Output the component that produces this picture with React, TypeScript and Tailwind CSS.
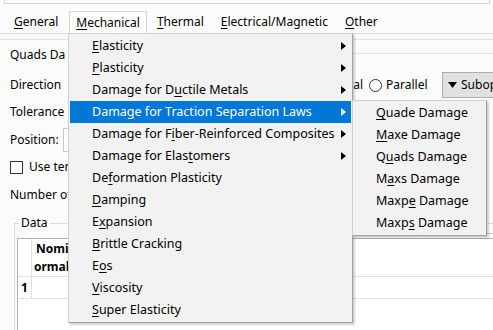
import React from "react";

const font = "font-['Noto_Sans','Liberation_Sans',sans-serif]";

// label with one underlined mnemonic letter: [before, key, after]
type Label = [string, string, string];

const mainItems: { label: Label; sub?: boolean; active?: boolean }[] = [
    { label: ["", "E", "lasticity"], sub: true },
    { label: ["", "P", "lasticity"], sub: true },
    { label: ["Damage for D", "u", "ctile Metals"], sub: true },
    { label: ["Dama", "g", "e for Traction Separation Laws"], sub: true, active: true },
    { label: ["Damage for F", "i", "ber-Reinforced Composites"], sub: true },
    { label: ["Damage for Elas", "t", "omers"], sub: true },
    { label: ["De", "f", "ormation Plasticity"] },
    { label: ["", "D", "amping"] },
    { label: ["E", "x", "pansion"] },
    { label: ["", "B", "rittle Cracking"] },
    { label: ["E", "o", "s"] },
    { label: ["", "V", "iscosity"] },
    { label: ["", "S", "uper Elasticity"] },
];

const subItems: Label[] = [
    ["", "Q", "uade Damage"],
    ["", "M", "axe Damage"],
    ["Q", "u", "ads Damage"],
    ["M", "a", "xs Damage"],
    ["Maxp", "e", " Damage"],
    ["Maxp", "s", " Damage"],
];

function Mnemonic({ label }: { label: Label }) {
    return (
        <span className="whitespace-nowrap">
            {label[0]}
            <span className="underline underline-offset-2">{label[1]}</span>
            {label[2]}
        </span>
    );
}

function Arrow({ white }: { white?: boolean }) {
    return (
        <svg width="5" height="8" viewBox="0 0 5 8" className="shrink-0">
            <path d="M0 0 L5 4 L0 8 Z" fill={white ? "#ffffff" : "#000000"} />
        </svg>
    );
}

export default function App() {
    const tabs: Label[] = [
        ["", "G", "eneral"],
        ["", "M", "echanical"],
        ["", "T", "hermal"],
        ["", "E", "lectrical/Magnetic"],
        ["", "O", "ther"],
    ];

    return (
        <div
            className={`relative w-[493px] h-[330px] overflow-hidden bg-[#fbfbfb] text-[12px] text-black ${font}`}>
            {/* Frame above the tabs */}
            <div className="mx-[4px] mr-[3px] h-[4px] border-x border-b border-[#d5d5d5]" />

            {/* Tabs */}
            <div className="mt-[7px] flex h-[23px] items-end border-b border-[#d9d9d9] pl-[8px]">
                {tabs.map((t, i) => (
                    <div
                        key={i}
                        className={`flex h-[22px] items-center px-[6px] ${
                            i === 1
                                ? "-mb-px h-[23px] border-x border-t border-[#d9d9d9] bg-white ml-[5px] mr-[4px]"
                                : i > 1
                                  ? "mr-[5px]"
                                  : ""
                        }`}>
                        <Mnemonic label={t} />
                    </div>
                ))}
            </div>

            {/* Panel */}
            <div className="mt-[5px] border-t border-[#e3e3e3] pl-[10px]">
                <div className="relative flex h-[22px] items-center mt-[4px]">
                    <span>Quads Da</span>
                    <div className="absolute left-[190px] right-0 top-[9px] border-t border-[#e3e3e3]" />
                </div>

                <div className="mt-[8px] flex h-[22px] items-center">
                    <span className="w-[290px] shrink-0">Direction</span>
                    <span className="flex w-[69px] shrink-0 items-center justify-end gap-[4px] pr-[6px]">
                        <span className="h-[13px] w-[13px] rounded-full border border-[#333]" />
                        Normal
                    </span>
                    <span className="flex w-[73px] shrink-0 items-center gap-[4px]">
                        <span className="h-[13px] w-[13px] rounded-full border border-[#333] bg-white" />
                        Parallel
                    </span>
                    <button className="flex h-[26px] w-[90px] shrink-0 items-center gap-[4px] border border-[#adadad] bg-[#e1e1e1] px-[5px]">
                        <svg width="9" height="6" viewBox="0 0 9 6">
                            <path d="M0 0 L9 0 L4.5 6 Z" fill="#000" />
                        </svg>
                        Suboptions
                    </button>
                </div>

                <div className="mt-[5px] flex h-[22px] items-center">
                    <span>Tolerance</span>
                </div>

                <div className="mt-[5px] flex h-[24px] items-center">
                    <span className="w-[53px] shrink-0">Position:</span>
                    <div className="h-[24px] w-[200px] border border-[#c8c8c8] bg-white" />
                </div>

                <div className="mt-[4px] flex h-[22px] items-center gap-[6px]">
                    <span className="h-[13px] w-[13px] border border-[#333] bg-white" />
                    <span>Use temp</span>
                </div>

                <div className="mt-[6px] flex h-[22px] items-center">
                    <span>Number of</span>
                </div>

                {/* Data group */}
                <div className="relative mt-[17px] ml-[4px] h-[120px] border-l border-t border-[#dcdcdc] pl-[2px]">
                    <span className="absolute -top-[10px] left-[4px] bg-[#fbfbfb] px-[2px] leading-[18px]">
                        Data
                    </span>
                    <div className="mt-[14px] border-l border-t border-[#b4b4b4] bg-white">
                        <div className="flex h-[38px] border-b border-[#e0e0e0]">
                            <div className="w-[14px] shrink-0 border-r border-[#e0e0e0]" />
                            <div className="flex flex-col justify-center pl-[2px] font-bold leading-[18px]">
                                <span className="pl-[2px]">Nominal</span>
                                <span>ormal</span>
                            </div>
                        </div>
                        <div className="flex h-[22px] border-b border-[#e0e0e0]">
                            <div className="flex w-[14px] shrink-0 items-center justify-center border-r border-[#e0e0e0] font-bold">
                                1
                            </div>
                            <div className="flex-1" />
                        </div>
                        <div className="h-[40px]" />
                    </div>
                </div>
            </div>

            {/* Right side table line below submenu */}
            <div className="absolute left-[440px] right-0 top-[233px] border-t border-[#d0d0d0]" />

            {/* Main dropdown menu */}
            <div className="absolute left-[68px] top-[33px] w-[285px] border border-[#a0a0a0] border-l-[#d0d0d0] border-t-[#d0d0d0] bg-[#f2f2f2] p-px text-[12.5px] shadow-[2px_2px_2px_rgba(0,0,0,0.18)]">
                {mainItems.map((item, i) => (
                    <div
                        key={i}
                        className={`flex h-[22px] items-center pl-[22px] pr-[5px] ${
                            item.active ? "bg-[#0078d7] text-white" : ""
                        }`}>
                        <span className="flex-1">
                            <Mnemonic label={item.label} />
                        </span>
                        {item.sub && <Arrow white={item.active} />}
                    </div>
                ))}
            </div>

            {/* Submenu */}
            <div className="absolute left-[352px] top-[100px] w-[135px] border border-[#a0a0a0] border-l-[#d0d0d0] border-t-[#d0d0d0] bg-[#f2f2f2] p-px text-[12.5px] shadow-[2px_2px_2px_rgba(0,0,0,0.18)]">
                {subItems.map((s, i) => (
                    <div key={i} className="flex h-[22px] items-center pl-[22px]">
                        <Mnemonic label={s} />
                    </div>
                ))}
            </div>
        </div>
    );
}
